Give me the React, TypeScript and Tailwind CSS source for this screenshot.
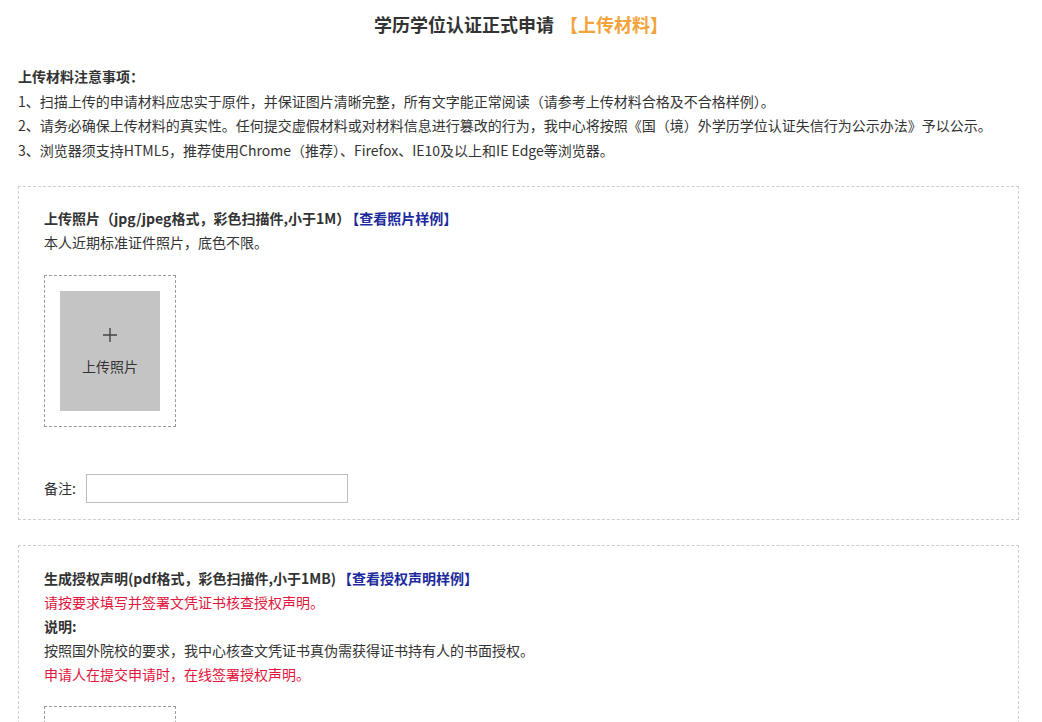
import React from "react";

function UploadBox({ label }: { label?: string }) {
  return (
    <div className="w-[132px] h-[152px] border border-dashed border-[#9a9a9a] p-[15px]">
      <div className="w-[100px] h-[120px] bg-[#c4c4c4] flex flex-col items-center">
        <div className="mt-[34px] h-[20px] flex items-center justify-center">
          <svg width="16" height="16" viewBox="0 0 16 16">
            <path d="M8 1 V15 M1 8 H15" stroke="#444" strokeWidth="1.4" fill="none" />
          </svg>
        </div>
        {label ? (
          <div className="mt-[11px] text-[14px] leading-[20px] text-[#333]">{label}</div>
        ) : null}
      </div>
    </div>
  );
}

export default function App() {
  return (
    <div
      className="w-[1042px] h-[722px] overflow-hidden bg-white text-[#333] text-[14px]"
      style={{ fontFamily: '"Noto Sans CJK SC", "Noto Sans", sans-serif' }}
    >
      <div className="h-12 flex items-center justify-center text-[18px] font-bold text-[#333]">
        <span>学历学位认证正式申请</span>
        <span className="ml-[6px] text-[#f2a33a]">【上传材料】</span>
      </div>

      <div className="mt-4 pl-[18px] pr-[23px] leading-[24.5px]">
        <div className="font-bold">上传材料注意事项：</div>
        <div>1、扫描上传的申请材料应忠实于原件，并保证图片清晰完整，所有文字能正常阅读（请参考上传材料合格及不合格样例）。</div>
        <div>2、请务必确保上传材料的真实性。任何提交虚假材料或对材料信息进行篡改的行为，我中心将按照《国（境）外学历学位认证失信行为公示办法》予以公示。</div>
        <div>3、浏览器须支持HTML5，推荐使用Chrome（推荐）、Firefox、IE10及以上和IE Edge等浏览器。</div>
      </div>

      <div className="mt-6 pl-[18px] pr-[23px]">
        <div className="border border-dashed border-[#cfcfcf] pt-[19px] pb-[16px] px-[25px]">
          <div className="leading-[24px]">
            <span className="font-bold">上传照片（jpg/jpeg格式，彩色扫描件,小于1M）</span>
            <span className="ml-[2px] font-bold text-[#1b2a9c]">【查看照片样例】</span>
          </div>
          <div className="leading-[24px]">本人近期标准证件照片，底色不限。</div>
          <div className="mt-[21px]">
            <UploadBox label="上传照片" />
          </div>
          <div className="mt-[47px] flex items-center">
            <span className="w-[42px] text-[14px]">备注:</span>
            <input
              type="text"
              className="w-[262px] h-[29px] border border-[#bdbdbd] outline-none px-2"
            />
          </div>
        </div>

        <div className="mt-[25px] border border-dashed border-[#cfcfcf] pt-[20px] pb-[16px] px-[25px]">
          <div className="leading-[24px]">
            <span className="font-bold">生成授权声明(pdf格式，彩色扫描件,小于1MB)</span>
            <span className="ml-[2px] font-bold text-[#1b2a9c]">【查看授权声明样例】</span>
          </div>
          <div className="leading-[24px] text-[#e0163c]">请按要求填写并签署文凭证书核查授权声明。</div>
          <div className="leading-[24px] font-bold">说明:</div>
          <div className="leading-[24px]">按照国外院校的要求，我中心核查文凭证书真伪需获得证书持有人的书面授权。</div>
          <div className="leading-[24px] text-[#e0163c]">申请人在提交申请时，在线签署授权声明。</div>
          <div className="mt-5">
            <UploadBox />
          </div>
        </div>
      </div>
    </div>
  );
}
